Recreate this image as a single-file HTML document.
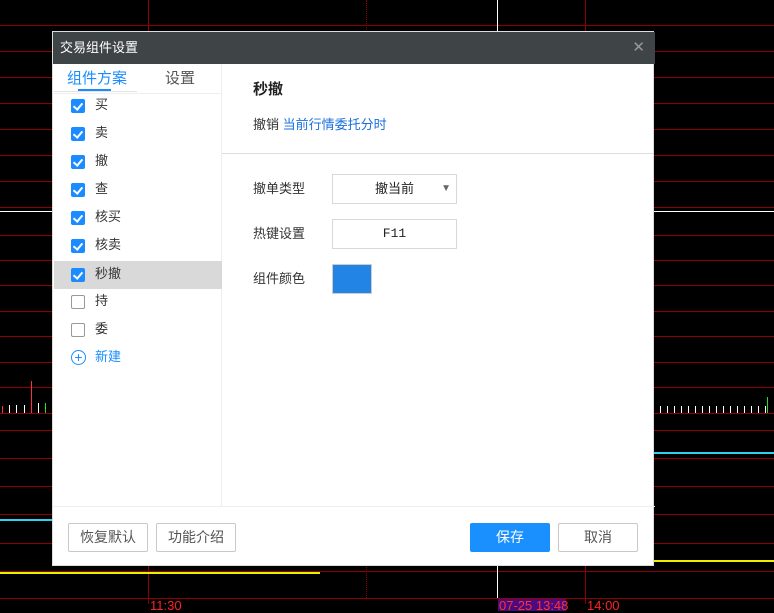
<!DOCTYPE html>
<html><head><meta charset="utf-8"><style>
*{margin:0;padding:0;box-sizing:border-box}
body{width:774px;height:611px;background:#000;position:relative;overflow:hidden;font-family:"Liberation Sans","Noto Sans CJK SC",sans-serif;font-size:13px;color:#333}
.h{position:absolute;left:0;width:774px;height:1px;background:#900000}
.v{position:absolute;top:0;width:1px;height:598px;background:#900000}
.a{position:absolute}
.dlg{position:absolute;left:52px;top:31px;width:602px;height:535px;background:#fff;border:1px solid #ddd}
.title{position:absolute;left:0;top:0;width:602px;height:32px;background:#3f4447;color:#fff;font-size:13px;line-height:32px;padding-left:7px}
.row{position:absolute;left:1px;width:168px;height:28px;line-height:28px}
.cb{position:absolute;left:17px;top:7px;width:14px;height:14px;border-radius:2px;background:#1a8cff}
.cb.off{background:#fff;border:1px solid #999}
.row span{position:absolute;left:41px;top:-1px}
.btn{position:absolute;top:491px;width:80px;height:29px;border:1px solid #c8c8c8;border-radius:2px;text-align:center;line-height:27px;font-size:14px;color:#555}
.box{position:absolute;left:279px;width:125px;height:30px;border:1px solid #d8d8d8;text-align:center;line-height:28px;color:#222}
.lab{position:absolute;left:200px}
.cb:not(.off)::after{content:"";position:absolute;left:4px;top:2px;width:4px;height:7px;border:solid #fff;border-width:0 2px 2px 0;transform:rotate(40deg)}
</style></head><body>
<div class="h" style="top:25px"></div><div class="h" style="top:51px"></div><div class="h" style="top:77px"></div><div class="h" style="top:103px"></div><div class="h" style="top:129px"></div><div class="h" style="top:155px"></div><div class="h" style="top:181px"></div><div class="h" style="top:207px"></div>
<div class="h" style="top:211px;background:#fff"></div>
<div class="h" style="top:235px"></div><div class="h" style="top:260px"></div><div class="h" style="top:285px"></div><div class="h" style="top:311px"></div><div class="h" style="top:336px"></div><div class="h" style="top:362px"></div><div class="h" style="top:387px"></div><div class="h" style="top:413px"></div><div class="h" style="top:430px"></div><div class="h" style="top:458px"></div><div class="h" style="top:486px"></div><div class="h" style="top:514px"></div><div class="h" style="top:543px"></div><div class="h" style="top:571px"></div><div class="h" style="top:598px"></div>
<div class="v" style="left:148px;height:604px"></div>
<div class="v" style="left:366px;background:none;border-left:1px dotted #900000"></div>
<div class="v" style="left:497px;background:#fff"></div>
<div class="v" style="left:585px;height:604px"></div>
<div class="a" style="left:2px;top:406px;width:1px;height:7px;background:#f33"></div>
<div class="a" style="left:9px;top:405px;width:1px;height:8px;background:#fff"></div>
<div class="a" style="left:16px;top:405px;width:1px;height:8px;background:#fff"></div>
<div class="a" style="left:24px;top:405px;width:1px;height:8px;background:#fff"></div>
<div class="a" style="left:31px;top:381px;width:1px;height:32px;background:#f33"></div>
<div class="a" style="left:38px;top:403px;width:1px;height:10px;background:#fff"></div>
<div class="a" style="left:45px;top:403px;width:1px;height:10px;background:#2d2"></div>
<div class="a" style="left:660px;top:406px;width:110px;height:7px;background:repeating-linear-gradient(90deg,#fff 0 1px,transparent 1px 7px)"></div>
<div class="a" style="left:767px;top:397px;width:1px;height:16px;background:#2d2"></div>
<div class="a" style="left:0;top:519px;width:52px;height:2px;background:#2bd3f0"></div>
<div class="a" style="left:654px;top:452px;width:120px;height:2px;background:#2bd3f0"></div>
<div class="a" style="left:0;top:572px;width:320px;height:2px;background:#ee0"></div>
<div class="a" style="left:654px;top:560px;width:120px;height:2px;background:#ee0"></div>
<div class="a" style="left:150px;top:598px;color:#f22;font-size:13px">11:30</div>
<div class="a" style="left:498px;top:599px;width:68px;height:12px;background:#4a0a80"></div>
<div class="a" style="left:499px;top:598px;color:#f33;font-size:13px">07-25 13:48</div>
<div class="a" style="left:587px;top:598px;color:#f22;font-size:13px">14:00</div>

<div class="dlg">
<div class="title">交易组件设置<span style="position:absolute;right:10px;top:0;color:#999;font-size:15px">✕</span></div>
<div class="a" style="left:168px;top:32px;width:1px;height:442px;background:#eee"></div>
<div class="a" style="left:14px;top:35px;color:#1a8cff;font-size:15px">组件方案</div>
<div class="a" style="left:112px;top:35px;color:#555;font-size:15px">设置</div>
<div class="a" style="left:1px;top:59px;width:83px;height:1px;background:#e5e5e5"></div>
<div class="a" style="left:25px;top:57px;width:33px;height:2px;background:#1a8cff"></div>
<div class="a" style="left:1px;top:61px;width:167px;height:1px;background:#eee"></div>
<div class="row" style="top:60px"><i class="cb"></i><span>买</span></div>
<div class="row" style="top:88px"><i class="cb"></i><span>卖</span></div>
<div class="row" style="top:116px"><i class="cb"></i><span>撤</span></div>
<div class="row" style="top:144px"><i class="cb"></i><span>查</span></div>
<div class="row" style="top:172px"><i class="cb"></i><span>核买</span></div>
<div class="row" style="top:200px"><i class="cb"></i><span>核卖</span></div>
<div class="row" style="top:229px;background:#d9d9d9"><i class="cb"></i><span>秒撤</span></div>
<div class="row" style="top:256px"><i class="cb off"></i><span>持</span></div>
<div class="row" style="top:284px"><i class="cb off"></i><span>委</span></div>
<div class="row" style="top:312px;color:#1a8cff"><i style="position:absolute;left:17px;top:6px;width:15px;height:15px;border:1px solid #1a8cff;border-radius:50%;text-align:center;line-height:12px;font-style:normal;font-size:14px">+</i><span>新建</span></div>
<div class="a" style="left:200px;top:46px;font-size:15px;font-weight:bold;color:#222">秒撤</div>
<div class="a" style="left:200px;top:82px;color:#333">撤销 <span style="color:#1a6fe0">当前行情委托分时</span></div>
<div class="a" style="left:169px;top:121px;width:432px;height:1px;background:#ddd"></div>
<div class="lab" style="top:146px">撤单类型</div>
<div class="box" style="top:142px">撤当前<span style="position:absolute;right:5px;top:0;color:#666;font-size:10px">▼</span></div>
<div class="lab" style="top:191px">热键设置</div>
<div class="box" style="top:187px;font-family:'Liberation Mono',monospace">F11</div>
<div class="lab" style="top:236px">组件颜色</div>
<div class="a" style="left:279px;top:232px;width:40px;height:30px;background:#2284e4;border:1px solid #ccc"></div>
<div class="a" style="left:0;top:474px;width:602px;height:1px;background:#eee"></div>
<div class="btn" style="left:15px">恢复默认</div>
<div class="btn" style="left:103px">功能介绍</div>
<div class="btn" style="left:417px;background:#1a90ff;border-color:#1a90ff;color:#fff">保存</div>
<div class="btn" style="left:505px">取消</div>
</div>
</body></html>
